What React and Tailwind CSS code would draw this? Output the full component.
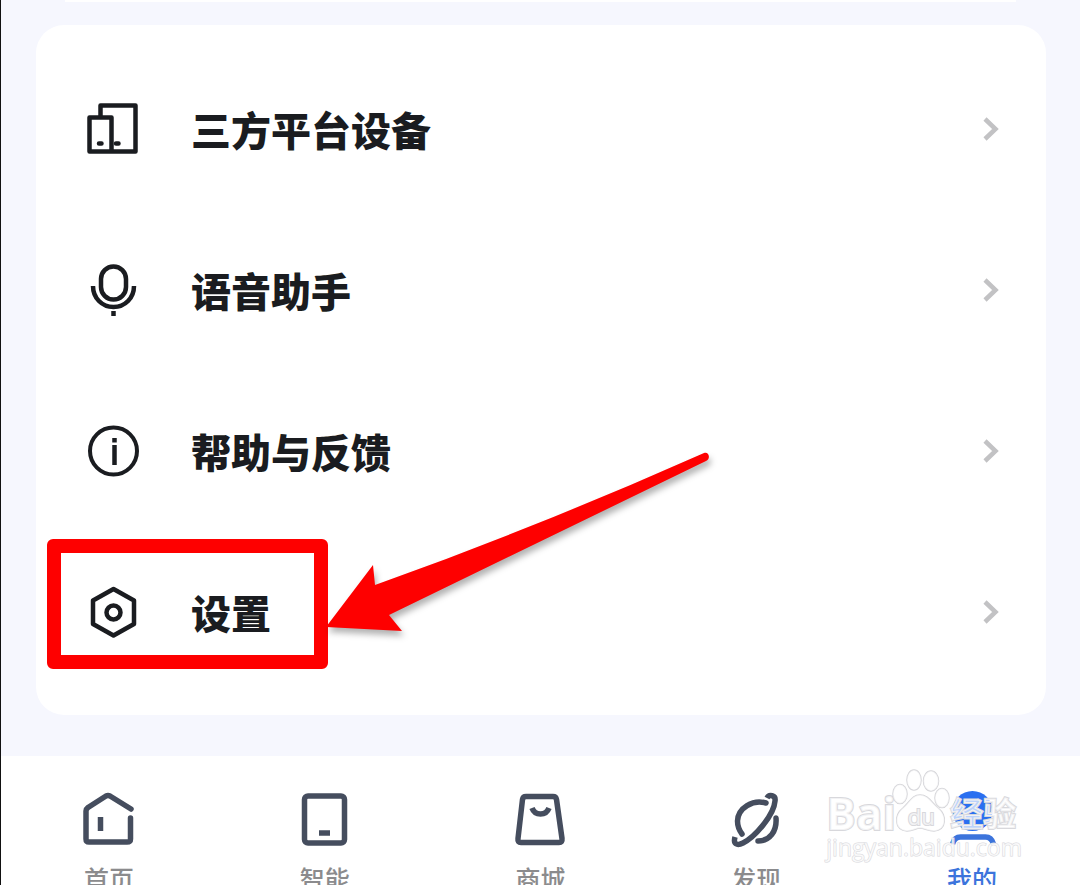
const DevicesIcon = () => (
  <svg className="h-14 w-14" viewBox="0 0 56 56" fill="none" stroke="#1a1c20" strokeWidth="4.500" strokeLinejoin="round">
    <path d="M15.500 16V4.500h35v46H4.500V16.500h22v34" />
    <path d="M14 42.500h2.500M31 42.500h2.500" strokeLinecap="round" />
  </svg>
);

const MicIcon = () => (
  <svg className="h-14 w-14" viewBox="0 0 56 56" fill="none" stroke="#1a1c20" strokeWidth="4.500">
    <rect x="16" y="4.500" width="25" height="33" rx="12.500" />
    <path d="M8 24C8 36 17 45 28.500 45S49 36 49 24" />
    <path d="M28.500 49v5" />
  </svg>
);

const InfoIcon = () => (
  <svg className="h-14 w-14" viewBox="0 0 56 56" fill="none" stroke="#1a1c20" strokeWidth="4">
    <circle cx="28.500" cy="28" r="23.500" />
    <path d="M29.500 22v20M29.500 15v4.500" strokeWidth="4.500" />
  </svg>
);

const SettingsIcon = () => (
  <svg className="h-14 w-14" viewBox="0 0 56 56" fill="none" stroke="#1a1c20" strokeWidth="4.500" strokeLinejoin="round">
    <path d="M28.500 5 49 16.500V40L28.500 51.500 8 40V16.500Z" />
    <circle cx="28.500" cy="28.500" r="7" />
  </svg>
);

const HomeIcon = () => (
  <svg className="h-15 w-15" viewBox="0 0 60 60" fill="none" stroke="#454d5e" strokeWidth="5.500" strokeLinecap="round" strokeLinejoin="round">
    <path d="M52 23 31 10Q29 9 27 10L9 21.500Q7 23 7 25V53Q7 56 10 56H48Q51.500 56 51.500 53V32" />
    <path d="M21.500 31v14" strokeLinecap="butt" />
  </svg>
);

const SmartIcon = () => (
  <svg className="h-15 w-15" viewBox="0 0 60 60" fill="none" stroke="#454d5e" strokeWidth="5.500">
    <rect x="9.500" y="10" width="40" height="47" rx="3.500" />
    <path d="M24 47h11" />
  </svg>
);

const MallIcon = () => (
  <svg className="h-15 w-15" viewBox="0 0 60 60" fill="none" stroke="#454d5e" strokeWidth="5.500" strokeLinejoin="round">
    <path d="M16 10.500H43Q46 10.500 46.500 13.500L52 52.500Q52.500 56.500 49 56.500H11Q7.500 56.500 8 52.500L12.500 13.500Q13 10.500 16 10.500Z" />
    <path d="M22 22C25 30 36 30 39 22" />
  </svg>
);

const DiscoverIcon = () => (
  <svg className="h-15 w-15 overflow-visible" viewBox="0 0 60 60" fill="none" stroke="#454d5e" strokeWidth="5.500" strokeLinecap="round" strokeLinejoin="round">
    <path d="M40 17C27 13 12 22 11.500 35Q11.500 42 16 48" />
    <path d="M50 32C51 45 44 55 32 55" />
    <path d="M41 12C43 8 50 9 49 15C48 29 29 51 17 57C11 60 7 58 9 51" strokeLinecap="butt" />
  </svg>
);

const MineIcon = () => (
  <svg className="h-15 w-15" viewBox="0 0 60 60" fill="none">
    <circle cx="30.500" cy="25" r="20" fill="#2a6ff0" />
    <path d="M10.500 58Q12.500 51 18.500 51H43.500Q49.500 51 51.500 58" stroke="#3c74dc" strokeWidth="5.500" />
  </svg>
);

const ChevronIcon = () => (
  <svg className="h-6 w-4" viewBox="0 0 16 24" fill="none" stroke="#c2c2c4" strokeWidth="4.500">
    <path d="M2 2 12.500 12 2 22" />
  </svg>
);

const menuItems = [
  { label: "三方平台设备", icon: DevicesIcon },
  { label: "语音助手", icon: MicIcon },
  { label: "帮助与反馈", icon: InfoIcon },
  { label: "设置", icon: SettingsIcon, highlighted: true },
];

const tabs = [
  { label: "首页", icon: HomeIcon },
  { label: "智能", icon: SmartIcon },
  { label: "商城", icon: MallIcon },
  { label: "发现", icon: DiscoverIcon },
  { label: "我的", icon: MineIcon, active: true },
];

// Red frame and arrow pointing at the settings entry
const Callout = () => (
  <div className="pointer-events-none absolute top-2 left-[11px]">
    <div className="h-[130px] w-[281px] rounded-md border-[14px] border-[#fe0000]" />
    <svg
      className="absolute top-[-99px] left-[273px] h-[210px] w-[410px] drop-shadow-[2px_5px_3px_rgba(0,0,0,0.3)]"
      viewBox="320 440 410 210"
      fill="#fe0000"
    >
      <path d="M326 627 373 565 375 585Q540 526 704 453C709 451 711 459 706 461L389 615 402 631Z" />
    </svg>
  </div>
);

const Watermark = () => (
  <div className="pointer-events-none absolute top-[10px] right-[58px] flex flex-col font-['Open_Sans','Noto_Sans_CJK_SC',sans-serif] text-white/70 [-webkit-text-stroke:2px_#d8d8dc] [paint-order:stroke]">
    <div className="flex h-[70px] items-end font-bold">
      <span className="w-[66px] text-[44px] leading-[46px]">Bai</span>
      <div className="relative flex h-[67px] w-[58px] items-end justify-center">
        <svg className="absolute inset-0 h-full w-full" viewBox="0 0 58 67" fill="#ffffff" fillOpacity="0.7" stroke="#d4d4d8" strokeWidth="1.500">
          <ellipse cx="8" cy="25" rx="7" ry="9.500" />
          <ellipse cx="22" cy="11" rx="7" ry="10" />
          <ellipse cx="39" cy="12" rx="7.500" ry="10" />
          <ellipse cx="50" cy="29" rx="7" ry="9.500" />
          <path d="M28 26C20 26 18 33 11 39C2 46 2 61 15 62C21 62 24 59 28 59S36 62 42 62C55 61 55 46 46 39C39 33 36 26 28 26Z" />
        </svg>
        <span className="relative pb-2 text-[22px] leading-6 font-normal">du</span>
      </div>
      <span className="text-[33px] leading-[44px]">经验</span>
    </div>
    <span className="text-[23px] leading-[22px] [-webkit-text-stroke:1px_#d8d8dc]">jingyan.baidu.com</span>
  </div>
);

const App = () => {
  return (
    <div className="flex h-screen flex-col overflow-hidden border-l border-[#111111] bg-[#f6f7fe] font-['Noto_Sans_CJK_SC',sans-serif]">
      {/* End of the previous card */}
      <div className="mx-16 h-0.5 shrink-0 bg-white" />

      <main className="mt-[23px] mr-[34px] mb-[41px] ml-[35px] shrink-0 rounded-[28px] bg-white pt-[23px] pb-[23px]">
        <ul>
          {menuItems.map((item) => {
            const Icon = item.icon;
            return (
              <li key={item.label} className="relative">
                <button
                  type="button"
                  className="flex h-[161px] w-full cursor-pointer items-center pr-[47px] pl-[49px] text-left"
                >
                  <Icon />
                  <span className="ml-[50px] flex-1 text-[40px] leading-[60px] font-black text-[#1a1c20]">
                    {item.label}
                  </span>
                  <ChevronIcon />
                </button>
                {item.highlighted && <Callout />}
              </li>
            );
          })}
        </ul>
      </main>

      <nav className="relative grid shrink-0 grid-cols-5 bg-white pt-[30px] pb-6">
        {tabs.map((tab) => {
          const Icon = tab.icon;
          return (
            <a key={tab.label} href="#" className="flex flex-col items-center">
              <Icon />
              <span
                className={`mt-[14px] text-[25px] leading-9 font-medium ${
                  tab.active ? "text-[#3c74dc]" : "text-[#8b8b8d]"
                }`}
              >
                {tab.label}
              </span>
            </a>
          );
        })}
        <Watermark />
      </nav>
    </div>
  );
};

export default App;
